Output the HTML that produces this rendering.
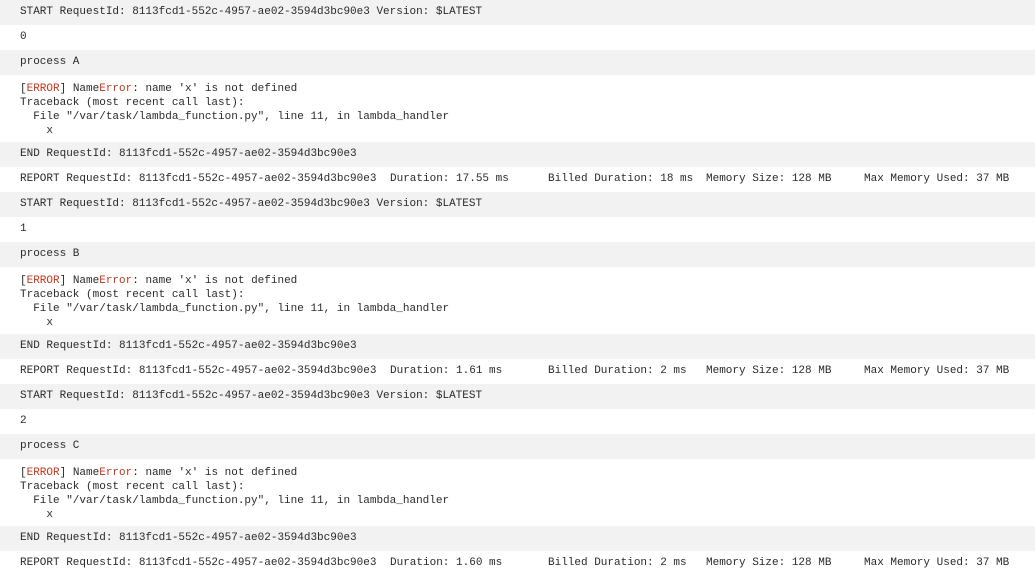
<!DOCTYPE html>
<html><head><meta charset="utf-8"><style>
body{margin:0;width:1035px;height:572px;overflow:hidden;background:#fff;font-family:"Liberation Mono",monospace;font-size:11px;color:#2a2a2a}
.r{position:relative;height:25px;line-height:25px;padding-left:20px;white-space:pre}
.g{background:#f2f2f2}
.e{height:67px;line-height:14px;padding-top:7px;box-sizing:border-box}
.red{color:#c9341a}
.t{position:absolute;top:0}
</style></head><body>
<div style="margin-top:0px">
<div class="r g">START RequestId: 8113fcd1-552c-4957-ae02-3594d3bc90e3 Version: $LATEST</div>
<div class="r">0</div>
<div class="r g">process A</div>
<div class="r e">[<span class="red">ERROR</span>] Name<span class="red">Error</span>: name 'x' is not defined
Traceback (most recent call last):
  File "/var/task/lambda_function.py", line 11, in lambda_handler
    x</div>
<div class="r g">END RequestId: 8113fcd1-552c-4957-ae02-3594d3bc90e3</div>
<div class="r">REPORT RequestId: 8113fcd1-552c-4957-ae02-3594d3bc90e3<span class="t" style="left:390px">Duration: 17.55 ms</span><span class="t" style="left:548px">Billed Duration: 18 ms</span><span class="t" style="left:706px">Memory Size: 128 MB</span><span class="t" style="left:864px">Max Memory Used: 37 MB</span></div>

<div class="r g">START RequestId: 8113fcd1-552c-4957-ae02-3594d3bc90e3 Version: $LATEST</div>
<div class="r">1</div>
<div class="r g">process B</div>
<div class="r e">[<span class="red">ERROR</span>] Name<span class="red">Error</span>: name 'x' is not defined
Traceback (most recent call last):
  File "/var/task/lambda_function.py", line 11, in lambda_handler
    x</div>
<div class="r g">END RequestId: 8113fcd1-552c-4957-ae02-3594d3bc90e3</div>
<div class="r">REPORT RequestId: 8113fcd1-552c-4957-ae02-3594d3bc90e3<span class="t" style="left:390px">Duration: 1.61 ms</span><span class="t" style="left:548px">Billed Duration: 2 ms</span><span class="t" style="left:706px">Memory Size: 128 MB</span><span class="t" style="left:864px">Max Memory Used: 37 MB</span></div>

<div class="r g">START RequestId: 8113fcd1-552c-4957-ae02-3594d3bc90e3 Version: $LATEST</div>
<div class="r">2</div>
<div class="r g">process C</div>
<div class="r e">[<span class="red">ERROR</span>] Name<span class="red">Error</span>: name 'x' is not defined
Traceback (most recent call last):
  File "/var/task/lambda_function.py", line 11, in lambda_handler
    x</div>
<div class="r g">END RequestId: 8113fcd1-552c-4957-ae02-3594d3bc90e3</div>
<div class="r">REPORT RequestId: 8113fcd1-552c-4957-ae02-3594d3bc90e3<span class="t" style="left:390px">Duration: 1.60 ms</span><span class="t" style="left:548px">Billed Duration: 2 ms</span><span class="t" style="left:706px">Memory Size: 128 MB</span><span class="t" style="left:864px">Max Memory Used: 37 MB</span></div>
</div>
</body></html>
